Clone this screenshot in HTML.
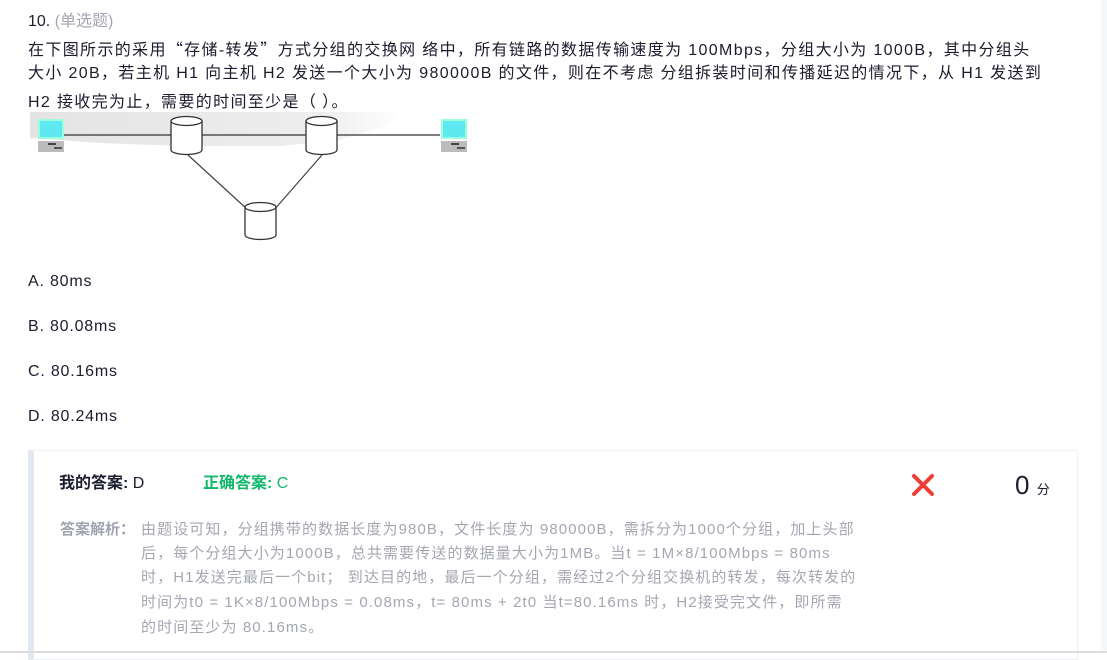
<!DOCTYPE html>
<html><head><meta charset="utf-8"><style>
body{margin:0;width:1107px;height:653px;overflow:hidden;background:#fff;font-family:"Liberation Sans","Noto Sans CJK SC",sans-serif;color:#1b1c2e;position:relative}
.ql{position:absolute;left:28px;font-size:16px;line-height:20px;height:20px;white-space:nowrap;letter-spacing:1.35px;z-index:2}
.t{color:#a3a6b0}
.cj{font-family:"Noto Sans CJK SC",sans-serif}
.opt{position:absolute;left:28px;font-size:16px;line-height:20px;letter-spacing:0.8px}
.box{position:absolute;left:28px;top:450px;width:1050px;height:210px;border:1px solid #eef0f3;border-left:6px solid #e1e8f2;box-sizing:border-box;background:#fff}
.ans{position:absolute;top:473px;font-size:16px;line-height:22px}
.al{position:absolute;left:141px;font-size:15px;line-height:20px;color:#a4a7b2;white-space:nowrap;letter-spacing:1.1px}
</style></head><body>
<div class="ql" style="top:12px;letter-spacing:0">10. <span class="t">(单选题)</span></div>
<div class="ql" style="top:38px">在下图所示的采用<span class="cj">“</span>存储-转发<span class="cj">”</span>方式分组的交换网 络中，所有链路的数据传输速度为 100Mbps，分组大小为 1000B，其中分组头</div>
<div class="ql" style="top:64px">大小 20B，若主机 H1 向主机 H2 发送一个大小为 980000B 的文件，则在不考虑 分组拆装时间和传播延迟的情况下，从 H1 发送到</div>
<div class="ql" style="top:90px">H2 接收完为止，需要的时间至少是<span class="cj">（ ）</span>。</div>
<svg style="position:absolute;left:0;top:0" width="500" height="250">
<defs><linearGradient id="g" x1="0" x2="1"><stop offset="0" stop-color="#e4e4e4"/><stop offset="0.8" stop-color="#eee"/><stop offset="1" stop-color="#fff"/></linearGradient></defs>
<path d="M30 112 L400 112 L390 125 L340 140 L280 146 L180 146 L100 143 L30 138Z" fill="url(#g)"/>
<line x1="64" y1="135" x2="440" y2="135" stroke="#333" stroke-width="1.3"/>
<line x1="188" y1="155" x2="248" y2="210" stroke="#444" stroke-width="1.2"/>
<line x1="322" y1="155" x2="274" y2="210" stroke="#444" stroke-width="1.2"/>
<g fill="#fff" stroke="#333" stroke-width="1.3">
<path d="M171 121 V150 A15.5 4.5 0 0 0 202 150 V121"/><ellipse cx="186.5" cy="121" rx="15.5" ry="4.5"/>
<path d="M306 121 V150 A15.5 4.5 0 0 0 337 150 V121"/><ellipse cx="321.5" cy="121" rx="15.5" ry="4.5"/>
<path d="M245 207 V235 A15.5 4.5 0 0 0 276 235 V207"/><ellipse cx="260.5" cy="207" rx="15.5" ry="4.5"/>
</g>
<g><rect x="38" y="119" width="26" height="20" fill="#9fd"/><rect x="40" y="121" width="22" height="16" fill="#5ee8f0"/><rect x="38" y="141" width="26" height="11" fill="#bbb"/><rect x="48" y="143" width="8" height="2" fill="#444"/><rect x="54" y="147" width="8" height="2" fill="#555"/></g>
<g><rect x="441" y="119" width="26" height="20" fill="#9fd"/><rect x="443" y="121" width="22" height="16" fill="#5ee8f0"/><rect x="441" y="141" width="26" height="11" fill="#bbb"/><rect x="451" y="143" width="8" height="2" fill="#444"/><rect x="457" y="147" width="8" height="2" fill="#555"/></g>
</svg>
<div class="opt" style="top:272px">A. 80ms</div>
<div class="opt" style="top:317px">B. 80.08ms</div>
<div class="opt" style="top:362px">C. 80.16ms</div>
<div class="opt" style="top:407px">D. 80.24ms</div>
<div style="position:absolute;left:1101px;top:0;width:6px;height:653px;background:#f6f7f9"></div>
<div class="box"></div>
<div style="position:absolute;left:0;top:651px;width:1107px;height:2px;background:#ddd"></div>
<div class="ans" style="left:59px"><b>我的答案:</b> D</div>
<div class="ans" style="left:203px;color:#10b86a"><b>正确答案:</b> C</div>
<svg style="position:absolute;left:911px;top:473px" width="24" height="24"><path d="M3 3L21 21M21 3L3 21" stroke="#f03c37" stroke-width="4" stroke-linecap="round"/></svg>
<div style="position:absolute;left:1015px;top:470px;font-size:26px;line-height:30px">0 <span style="font-size:13px">分</span></div>
<div class="al" style="left:60px;top:520px;font-weight:bold;color:#a0a4b0;letter-spacing:0">答案解析：</div>
<div class="al" style="top:520px">由题设可知，分组携带的数据长度为980B，文件长度为 980000B，需拆分为1000个分组，加上头部</div>
<div class="al" style="top:544px">后，每个分组大小为1000B，总共需要传送的数据量大小为1MB。当t = 1M×8/100Mbps = 80ms</div>
<div class="al" style="top:568px">时，H1发送完最后一个bit； 到达目的地，最后一个分组，需经过2个分组交换机的转发，每次转发的</div>
<div class="al" style="top:593px">时间为t0 = 1K×8/100Mbps = 0.08ms，t= 80ms + 2t0 当t=80.16ms 时，H2接受完文件，即所需</div>
<div class="al" style="top:618px">的时间至少为 80.16ms。</div>
</body></html>
